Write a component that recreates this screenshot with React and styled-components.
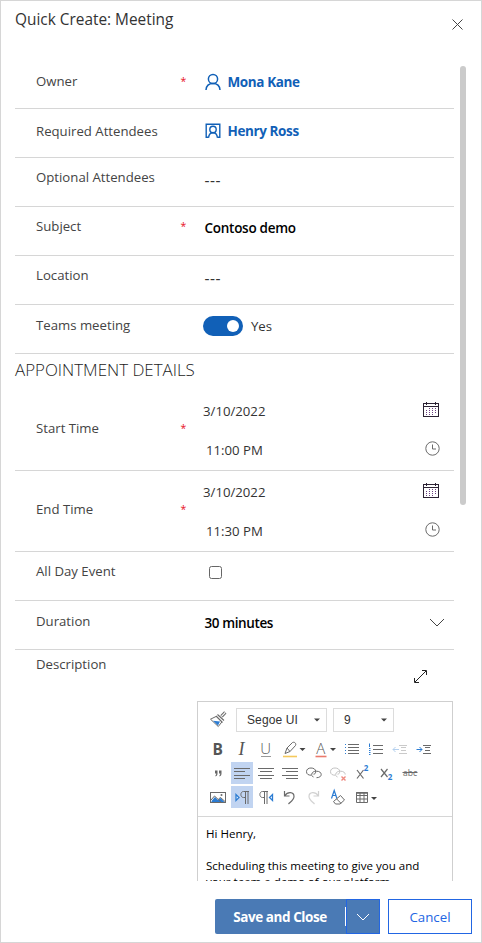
import React from "react";
import styled, { createGlobalStyle } from "styled-components";

const Global = createGlobalStyle`
  * { box-sizing: border-box; }
  html, body { margin: 0; padding: 0; background: #fff; }
  body { font-family: "Open Sans", "Noto Sans", sans-serif; font-size: 13.2px; color: #333; }
`;

const Panel = styled.section`
  width: 482px;
  height: 943px;
  border: 1px solid #d6d6d6;
  background: #fff;
  display: flex;
  flex-direction: column;
  overflow: hidden;
`;

const Header = styled.header`
  height: 58px;
  flex: none;
  padding: 8px 17px 0 14px;
  display: flex;
  justify-content: space-between;
  align-items: flex-start;
`;

const Title = styled.h1`
  margin: 0;
  font-size: 15.4px;
  font-weight: 400;
  line-height: 22px;
  color: #333;
`;

const CloseButton = styled.button`
  border: 0;
  background: none;
  padding: 0;
  margin-top: 9px;
  width: 13px;
  height: 13px;
  display: flex;
`;

const Body = styled.div`
  height: 822px;
  flex: none;
  display: flex;
  overflow: hidden;
`;

const Form = styled.div`
  width: 439px;
  margin-left: 14px;
  flex: none;
  padding-top: 1px;
`;

const ScrollTrack = styled.div`
  margin-left: 6px;
  padding-top: 7px;
`;

const ScrollThumb = styled.div`
  width: 6px;
  height: 439px;
  border-radius: 3px;
  background: #cbcbcb;
`;

const Row = styled.div`
  display: grid;
  grid-template-columns: 144px 44px 1fr;
  height: ${(p) => p.$h || 49}px;
  border-bottom: 1px solid #d6d6d6;
`;

const Label = styled.label`
  padding: ${(p) => p.$top}px 0 0 21px;
  line-height: 20px;
  color: #444;
  white-space: nowrap;
`;

const Required = styled.span`
  padding: ${(p) => p.$top}px 0 0 21.5px;
  line-height: 18px;
  font-size: 10.5px;
  color: #e81123;
`;

const Value = styled.div`
  padding: ${(p) => p.$top}px 0 0 ${(p) => p.$left ?? 1.5}px;
  line-height: 20px;
  display: flex;
  align-items: flex-start;
  white-space: nowrap;
`;

const Strong = styled.span`
  font-weight: 600;
  font-size: 13.5px;
  letter-spacing: ${(p) => p.$track || 0}px;
  color: #000;
`;

const Lookup = styled(Strong)`
  color: #1160b7;
  font-weight: 700;
  margin-left: 7px;
`;

const IconBox = styled.span`
  display: flex;
  padding-top: ${(p) => p.$top || 0}px;
  margin-right: ${(p) => p.$right || 0}px;
`;

const Dashes = styled.span`
  font-size: 15.5px;
  letter-spacing: 0.5px;
  color: #333;
`;

const Toggle = styled.span`
  width: 40px;
  height: 20px;
  border-radius: 10px;
  background: #1160b7;
  display: flex;
  align-items: center;
  justify-content: flex-end;
  padding-right: 4px;
  margin-right: 8px;
`;

const Knob = styled.span`
  width: 12.5px;
  height: 12.5px;
  border-radius: 50%;
  background: #fff;
`;

const SectionTitle = styled.h2`
  margin: 0;
  height: 36px;
  padding-top: 4px;
  line-height: 24px;
  font-size: 16.9px;
  font-weight: 350;
  color: #1c1c1c;
  white-space: nowrap;
`;

const TimeValues = styled.div`
  display: flex;
  flex-direction: column;
`;

const TimeLine = styled.div`
  display: flex;
  justify-content: space-between;
  height: ${(p) => (p.$second ? 39 : 41)}px;
  padding: ${(p) => (p.$second ? "9px 14px 0 3px" : "11px 15px 0 0")};
  line-height: 20px;
`;

const Checkbox = styled.span`
  width: 13px;
  height: 13px;
  border: 1px solid #666;
  border-radius: 2.5px;
`;

const Between = styled(Value)`
  justify-content: space-between;
  padding-right: 9px;
`;

const Description = styled.div`
  display: grid;
  grid-template-columns: 182px 1fr;
`;

const Expand = styled.div`
  display: flex;
  justify-content: flex-end;
  height: 51px;
  padding: 20px 27px 0 0;
`;

const Editor = styled.div`
  width: 256px;
  height: 230px;
  border: 1px solid #cfcfcf;
`;

const Toolbar = styled.div`
  height: 115px;
  padding: 6px 0 0 9px;
  border-bottom: 1px solid #d6d6d6;
`;

const ToolRow = styled.div`
  display: flex;
  gap: 2px;
  height: 22px;
  margin-bottom: 2px;
`;

const SelectRow = styled(ToolRow)`
  height: 24px;
  margin-bottom: 6px;
  gap: 6px;
`;

const SelectBox = styled.div`
  width: ${(p) => p.$w}px;
  height: 24px;
  border: 1px solid #dcdcdc;
  display: flex;
  align-items: center;
  justify-content: space-between;
  padding: 0 6px 0 10px;
  font: 12px "Liberation Sans", sans-serif;
  letter-spacing: 0.1px;
  color: #333;

  &:nth-child(2) { margin-left: 1px; }
`;

const Tool = styled.span`
  width: ${(p) => p.$w || 22}px;
  height: 22px;
  flex: none;
  display: flex;
  background: ${(p) => (p.$active ? "#c1d4f1" : "transparent")};
`;

const Message = styled.div`
  padding: 9px 8px;
  font-size: 11.55px;
  line-height: 16px;
  color: #000;

  p { margin: 0 0 16px; white-space: nowrap; }
`;

const Footer = styled.footer`
  display: flex;
  justify-content: flex-end;
  padding: 18px 9px 0 0;
`;

const SaveButton = styled.button`
  width: 131px;
  height: 35px;
  border: 0;
  border-radius: 2px 0 0 2px;
  background: #4a7ab5;
  color: #fff;
  font: 700 13.5px "Open Sans", sans-serif;
  letter-spacing: -0.42px;
  padding: 0;
  display: flex;
  align-items: center;
`;

const SaveText = styled.span`
  flex: 1;
  text-align: center;
`;

const Divider = styled.span`
  width: 1px;
  height: 19px;
  background: #fff;
`;

const SplitButton = styled.button`
  width: 34px;
  height: 35px;
  border: 1px solid #2266e3;
  background: #4a7ab5;
  padding: 0;
  display: flex;
  align-items: center;
  justify-content: center;
`;

const CancelButton = styled.button`
  width: 84px;
  height: 35px;
  margin-left: 8px;
  border: 1px solid #2266e3;
  background: #fff;
  color: #2266e3;
  font: 400 13.3px "Open Sans", sans-serif;
  padding: 0;
`;

const Glyph = styled.text`
  font-family: ${(p) => p.$family || '"Open Sans", sans-serif'};
  font-size: ${(p) => p.$size}px;
  font-weight: ${(p) => p.$weight || 400};
  font-style: ${(p) => (p.$italic ? "italic" : "normal")};
  fill: ${(p) => p.$color || "#555"};
`;

const G = "#6a6a6a";
const B = "#2b7cd3";

const Svg = ({ w = 22, h = 22, children, ...rest }) => (
  <svg width={w} height={h} viewBox={`0 0 ${w} ${h}`} fill="none" stroke={G} {...rest}>
    {children}
  </svg>
);

const PersonIcon = () => (
  <Svg w={16} h={18} stroke="#1160b7" strokeWidth="1.5">
    <circle cx="8" cy="6" r="4.6" />
    <path d="M1 17c.3-4 3.200-6.400 7-6.400s6.700 2.400 7 6.400" />
  </Svg>
);

const ContactIcon = () => (
  <Svg w={16} h={16} stroke="#1160b7" strokeWidth="1.400">
    <path d="M3.500 14.200H1.200V1.200h13.600v13h-2.300" />
    <circle cx="8" cy="6.500" r="3.200" />
    <path d="M3.600 14.800c.2-3 2-5 4.400-5s4.200 2 4.400 5" />
  </Svg>
);

const CalendarIcon = () => (
  <Svg w={16} h={15} stroke="#2b2233" shapeRendering="crispEdges">
    <path d="M.5 1.500h15v13H.5zM0 4.500h16M3.500 0v3M12.500 0v3" />
    <path d="M6 6.500h7M3 8.500h10M3 10.500h10M3 12.500h7" strokeDasharray="1 2" stroke="#6b4080" />
  </Svg>
);

const ClockIcon = () => (
  <Svg w={15} h={15}>
    <circle cx="7.500" cy="7.500" r="6.700" />
    <path d="M7.500 3.500v4.500h3.500" />
  </Svg>
);

const Caret = ({ x, y = 10 }) => <path d={`M${x} ${y}h6l-3 3z`} fill="#444" stroke="none" />;

const Lines = ({ list, color = G }) => (
  <path d={list.map(([x, y, w]) => `M${x} ${y}h${w}`).join("")} stroke={color} />
);

function DateField({ label, date, time }) {
  return (
    <Row $h={81}>
      <Label $top={28}>{label}</Label>
      <Required $top={29}>*</Required>
      <TimeValues>
        <TimeLine>
          <span>{date}</span>
          <IconBox $top={1}><CalendarIcon /></IconBox>
        </TimeLine>
        <TimeLine $second>
          <span>{time}</span>
          <IconBox $top={1}><ClockIcon /></IconBox>
        </TimeLine>
      </TimeValues>
    </Row>
  );
}

function EditorToolbar() {
  return (
    <Toolbar>
      <SelectRow>
        <Tool>
          <Svg>
            <path d="M18.300 4.300l-3.800 4" strokeWidth="3.200" />
            <path d="M18.300 4.300l-3.800 4" strokeWidth="1.200" stroke="#fff" />
            <path d="M10.500 6.500l6.500 6M9 8l6.500 6.500" strokeWidth="1.100" />
            <path d="M9 8.500l-5.500 2.700 7.800 7.300 3.500-4.500" />
            <path d="M6 12.700l7 .8-2 4z" fill={B} stroke="none" />
          </Svg>
        </Tool>
        <SelectBox $w={91}>Segoe UI<Svg w={6} h={4}><Caret x={0} y={0.5} /></Svg></SelectBox>
        <SelectBox $w={61}>9<Svg w={6} h={4}><Caret x={0} y={0.5} /></Svg></SelectBox>
      </SelectRow>
      <ToolRow>
        <Tool><Svg><Glyph stroke="none" x="5.500" y="17" $size={15.5} $weight={700}>B</Glyph></Svg></Tool>
        <Tool><Svg><Glyph stroke="none" x="7.500" y="17" $size={18} $italic $family={'"Liberation Serif", serif'}>I</Glyph></Svg></Tool>
        <Tool><Svg><Glyph stroke="none" x="5.300" y="15.500" $size={15} $weight={350}>U</Glyph><path d="M6 18.500h10" stroke="#999" /></Svg></Tool>
        <Tool $w={29}>
          <Svg w={29}>
            <path d="M4 18.500h14" stroke="#f5c95c" strokeWidth="1.600" />
            <path d="M6 15.500l2-5.500 5.500-5.500c2-1 4 1 3 3L11 13.500zM8 10l3 3.500" />
            <Caret x={20.5} />
          </Svg>
        </Tool>
        <Tool $w={29}>
          <Svg w={29}>
            <Glyph stroke="none" x="6.200" y="15.500" $size={15} $weight={350}>A</Glyph>
            <path d="M5.500 18.500h11" stroke="#ea7a6c" strokeWidth="1.600" />
            <Caret x={20} />
          </Svg>
        </Tool>
        <Tool><Svg><Lines list={[[7, 6.5, 11], [7, 9.5, 11], [7, 12.5, 11], [7, 15.5, 11]]} /><Lines color={B} list={[[4, 6.5, 1], [4, 9.5, 1], [4, 12.5, 1], [4, 15.5, 1]]} /></Svg></Tool>
        <Tool><Svg><Lines list={[[8, 7.5, 10], [8, 11.5, 10], [8, 15.5, 10]]} /><path d="M4.500 5.500v3.500M4 10.500h1.500M4 12.500h1.500M4 14.500h1.500M4 16.500h1.500" stroke={B} /></Svg></Tool>
        <Tool><Svg opacity=".35"><Lines list={[[10, 7.5, 8], [12, 9.5, 5], [12, 12.5, 5], [10, 15.5, 8]]} /><path d="M4 11.500h6M6.500 9L4 11.500 6.500 14" stroke={B} /></Svg></Tool>
        <Tool><Svg><Lines list={[[10, 7.5, 8], [12, 9.5, 5], [12, 12.5, 5], [10, 15.5, 8]]} /><path d="M3.500 11.500H9M6.500 9L9 11.500 6.500 14" stroke={B} /></Svg></Tool>
      </ToolRow>
      <ToolRow>
        <Tool><Svg><path d="M8 8.500h2.500v3c0 1.500-.7 2.500-2 3v-1.300c.6-.3.8-.9.8-1.600H8zM12 8.500h2.500v3c0 1.500-.7 2.500-2 3v-1.300c.6-.3.8-.9.8-1.600H12z" fill="#666" stroke="none" /></Svg></Tool>
        <Tool $active><Svg><Lines list={[[3, 6.5, 16], [3, 9.5, 11], [3, 13.5, 16], [3, 16.5, 11]]} /></Svg></Tool>
        <Tool><Svg><Lines list={[[3, 6.5, 16], [5, 9.5, 12], [3, 13.5, 16], [5, 16.5, 12]]} /></Svg></Tool>
        <Tool><Svg><Lines list={[[3, 6.5, 16], [7, 9.5, 12], [3, 13.5, 16], [7, 16.5, 12]]} /></Svg></Tool>
        <Tool><Svg><path d="M8 13.200c-2.500 0-4.500-1-4.500-3.500s2-3.700 4.500-3.700 4.700 1.200 4.700 3.500-1 2.500-2.200 2.700" /><path d="M10.500 15c-1.500-.5-2-1.500-1.800-2.700.3-2 2-3.100 4.800-3.100s4.700 1.300 4.700 3.300-2 3.200-4.700 3.200" /></Svg></Tool>
        <Tool><Svg><g opacity=".4"><path d="M8 13.200c-2.500 0-4.500-1-4.500-3.500s2-3.700 4.500-3.700 4.700 1.200 4.700 3.500-1 2.500-2.200 2.700" /><path d="M10.500 15c-1.500-.5-2-1.500-1.800-2.700.3-2 2-3.100 4.800-3.100s4.700 1.300 4.700 3.300" /></g><path d="M14.500 14.500l4 4m0-4l-4 4" stroke="#ef8a80" strokeWidth="1.400" /></Svg></Tool>
        <Tool><Svg><path d="M6 8l6.500 8.500M12.500 8L6 16.500" strokeWidth="1.200" /><Glyph stroke="none" x="12.800" y="9" $size={8} $weight={700} $color={B}>2</Glyph></Svg></Tool>
        <Tool><Svg><path d="M6 7l6.500 8M12.500 7L6 15" strokeWidth="1.200" /><Glyph stroke="none" x="12.800" y="18" $size={8} $weight={700} $color={B}>2</Glyph></Svg></Tool>
        <Tool><Svg><Glyph stroke="none" x="4" y="13.500" $size={8.5} $color={G}>abc</Glyph><path d="M3.500 10.500h15" /></Svg></Tool>
      </ToolRow>
      <ToolRow>
        <Tool>
          <Svg>
            <path d="M4.500 15l3.500-4 3 3 2.500-2 4 4v.5h-13z" fill={B} stroke="none" />
            <rect x="3.500" y="6.500" width="15" height="10" />
            <path d="M4 14l3.500-4 7 6.500M11.500 13l2-1.500 4.500 4" />
            <circle cx="14.500" cy="9" r="1" fill={G} stroke="none" />
          </Svg>
        </Tool>
        <Tool $active><Svg><path d="M5 8.500v6l3-3z" stroke={B} strokeWidth="1.300" fill="#fff" /><path d="M18 5.500h-5.500c-3.500 0-3.500 6 0 6H14M14.500 5.500V18M17 5.500V18" /></Svg></Tool>
        <Tool><Svg><path d="M17.500 8.500v6l-3-3z" stroke={B} strokeWidth="1.300" fill="#fff" /><path d="M13 5.500H7.500c-3.500 0-3.500 6 0 6H9M9.500 5.500V18M12 5.500V18" /></Svg></Tool>
        <Tool><Svg strokeWidth="1.200"><path d="M5.500 5v5h5M6 9.500c2.500-4 9-4 9 1 0 3-3 5-5.500 7.500" /></Svg></Tool>
        <Tool><Svg strokeWidth="1.200" opacity=".3"><path d="M15.500 5v5h-5M15 9.500c-2.500-4-9-4-9 1 0 3 3 5 5.500 7.500" /></Svg></Tool>
        <Tool><Svg><path d="M4.500 12.500L7.200 4.500l2.700 8M5.500 9.500h3.600" stroke={B} strokeWidth="1.200" /><path d="M6.500 15.500l7-6 4 4.500-4.500 4H8.500zM9.500 12.800l4.500 4.500" /></Svg></Tool>
        <Tool $w={29}><Svg w={29}><path d="M5.500 6.500h11v10h-11zM5 9.500h12M5 13h12M9 6v11M13 6v11" /><path d="M5 7h12" strokeWidth="1.500" /><Caret x={20} y={11} /></Svg></Tool>
      </ToolRow>
    </Toolbar>
  );
}

export default function App() {
  return (
    <>
      <Global />
      <Panel>
        <Header>
          <Title>Quick Create: Meeting</Title>
          <CloseButton aria-label="Close">
            <Svg w={13} h={13} stroke="#444"><path d="M1.500 1.500l10 10m0-10l-10 10" /></Svg>
          </CloseButton>
        </Header>
        <Body>
          <Form>
            <Row>
              <Label $top={11}>Owner</Label>
              <Required $top={12}>*</Required>
              <Value $top={12}>
                <IconBox $top={1}><PersonIcon /></IconBox>
                <Lookup $track={-0.38}>Mona Kane</Lookup>
              </Value>
            </Row>
            <Row>
              <Label $top={12}>Required Attendees</Label>
              <span />
              <Value $top={12}>
                <IconBox $top={2}><ContactIcon /></IconBox>
                <Lookup $track={-0.4}>Henry Ross</Lookup>
              </Value>
            </Row>
            <Row>
              <Label $top={9}>Optional Attendees</Label>
              <span />
              <Value $top={12}><Dashes>---</Dashes></Value>
            </Row>
            <Row>
              <Label $top={9}>Subject</Label>
              <Required $top={10}>*</Required>
              <Value $top={11}><Strong $track={-0.27}>Contoso demo</Strong></Value>
            </Row>
            <Row>
              <Label $top={9}>Location</Label>
              <span />
              <Value $top={12}><Dashes>---</Dashes></Value>
            </Row>
            <Row>
              <Label $top={10}>Teams meeting</Label>
              <span />
              <Value $top={11} $left={0}>
                <Toggle><Knob /></Toggle>
                Yes
              </Value>
            </Row>
            <SectionTitle>APPOINTMENT DETAILS</SectionTitle>
            <DateField label="Start Time" date="3/10/2022" time="11:00 PM" />
            <DateField label="End Time" date="3/10/2022" time="11:30 PM" />
            <Row>
              <Label $top={9}>All Day Event</Label>
              <span />
              <Value $top={14} $left={6}><Checkbox /></Value>
            </Row>
            <Row>
              <Label $top={10}>Duration</Label>
              <span />
              <Between $top={12}>
                <Strong $track={-0.4}>30 minutes</Strong>
                <IconBox $top={5}><Svg w={16} h={10} stroke="#444"><path d="M1 1l7 7 7-7" /></Svg></IconBox>
              </Between>
            </Row>
            <Description>
              <Label $top={4}>Description</Label>
              <div>
                <Expand>
                  <Svg w={13} h={13} stroke="#222"><path d="M1 12L12 1M8 .5h4.500V5M.5 8v4.500H5" /></Svg>
                </Expand>
                <Editor>
                  <EditorToolbar />
                  <Message>
                    <p>Hi Henry,</p>
                    <p>Scheduling this meeting to give you and<br />your team a demo of our platform.</p>
                  </Message>
                </Editor>
              </div>
            </Description>
          </Form>
          <ScrollTrack><ScrollThumb /></ScrollTrack>
        </Body>
        <Footer>
          <SaveButton><SaveText>Save and Close</SaveText><Divider /></SaveButton>
          <SplitButton aria-label="More save options">
            <Svg w={14} h={8} stroke="#fff"><path d="M1 1l6 6 6-6" /></Svg>
          </SplitButton>
          <CancelButton>Cancel</CancelButton>
        </Footer>
      </Panel>
    </>
  );
}
